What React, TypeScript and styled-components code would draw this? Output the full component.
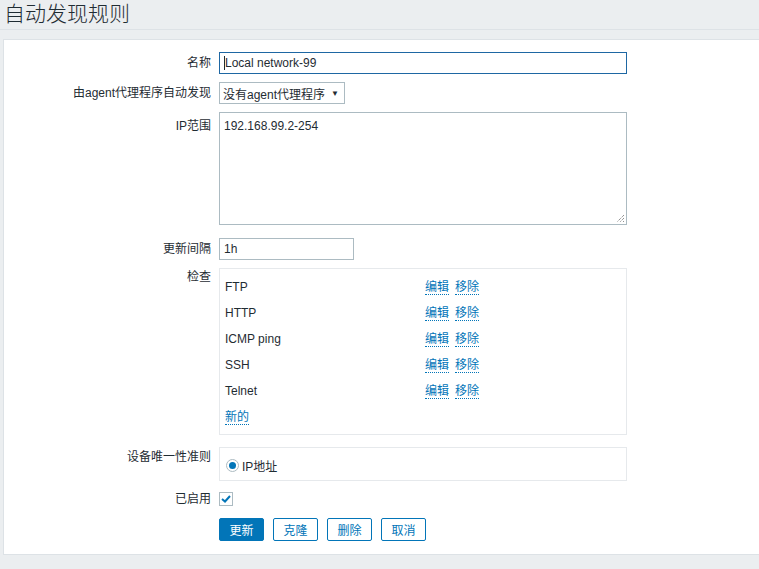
import React from 'react'
import styled, { createGlobalStyle } from 'styled-components'

const GlobalStyle = createGlobalStyle`
  html, body {
    margin: 0;
    padding: 0;
    background: #ebeef0;
    font-family: "Liberation Sans", Arial, "Noto Sans CJK SC", sans-serif;
    font-size: 12px;
    color: #1f2c33;
  }
`

const Header = styled.div`
  height: 29px;
  border-bottom: 1px solid #dde2e6;
  padding-left: 4px;
  display: flex;
  align-items: center;
`

const Title = styled.h1`
  margin: 0;
  font-size: 21px;
  font-weight: 300;
  line-height: 24px;
  color: #1f2c33;
  margin-top: -2px;
`

const Panel = styled.div`
  margin: 9px 0 0 3px;
  background: #fff;
  border: 1px solid #dde2e6;
  border-right: none;
  padding: 12px 0 13px 0;
`

const Row = styled.div<{ $mb?: number }>`
  display: grid;
  grid-template-columns: 207px 1fr;
  column-gap: 8px;
  margin-bottom: ${p => p.$mb ?? 8}px;
`

const Label = styled.div<{ $top?: boolean; $pt?: number }>`
  text-align: right;
  align-self: ${p => (p.$top ? 'start' : 'center')};
  padding-top: ${p => p.$pt ?? 0}px;
  white-space: nowrap;
  line-height: 14px;
`

const Field = styled.div`
  display: flex;
  align-items: center;
`

const TextInput = styled.div<{ $w: number; $focus?: boolean }>`
  box-sizing: border-box;
  width: ${p => p.$w}px;
  height: 22px;
  border: 1px solid ${p => (p.$focus ? '#1e67a3' : '#acbbc2')};
  padding: 0 4px;
  display: flex;
  align-items: center;
  font-size: 12px;
  background: #fff;
`

const Caret = styled.span`
  display: inline-block;
  width: 1px;
  height: 14px;
  background: #1f2c33;
`

const Select = styled.div`
  box-sizing: border-box;
  width: 126px;
  height: 22px;
  border: 1px solid #acbbc2;
  padding: 0 5px 0 3px;
  display: flex;
  align-items: center;
  justify-content: space-between;
  font-size: 12px;
`

const Arrow = styled.span`
  font-size: 8px;
  color: #1f2c33;
`

const TextArea = styled.div`
  position: relative;
  box-sizing: border-box;
  width: 408px;
  height: 113px;
  border: 1px solid #acbbc2;
  padding: 6px 4px;
  font-size: 12px;
`

const Grip = styled.svg`
  position: absolute;
  right: 1px;
  bottom: 1px;
`

const Box = styled.div<{ $h?: number }>`
  box-sizing: border-box;
  width: 408px;
  border: 1px solid #e6e9ec;
  padding: 5px 5px 4px 5px;
  ${p => (p.$h ? `height: ${p.$h}px;` : '')}
`

const CheckRow = styled.div`
  display: flex;
  align-items: center;
  height: 26px;
`

const CheckName = styled.div`
  width: 200px;
`

const Link = styled.a`
  color: #0275b8;
  text-decoration: none;
  border-bottom: 1px dotted #0275b8;
  line-height: 14px;
  margin-right: 6px;
  cursor: pointer;
`

const RadioLine = styled.div`
  display: flex;
  align-items: center;
  height: 24px;
  padding-left: 1px;
`

const Radio = styled.span`
  box-sizing: border-box;
  width: 13px;
  height: 13px;
  border-radius: 50%;
  border: 1px solid #acbbc2;
  display: flex;
  align-items: center;
  justify-content: center;
  margin-right: 3px;
  &::after {
    content: '';
    width: 7px;
    height: 7px;
    border-radius: 50%;
    background: #0275b8;
  }
`

const Check = styled.span`
  box-sizing: border-box;
  width: 14px;
  height: 14px;
  border: 1px solid #acbbc2;
  display: flex;
  align-items: center;
  justify-content: center;
  background: #fff;
`

const Buttons = styled.div`
  display: flex;
  gap: 9px;
`

const Button = styled.button<{ $primary?: boolean }>`
  box-sizing: border-box;
  width: 45px;
  height: 23px;
  padding: 0;
  font-family: inherit;
  font-size: 12px;
  border-radius: 2px;
  border: 1px solid #0275b8;
  background: ${p => (p.$primary ? '#0275b8' : '#fff')};
  color: ${p => (p.$primary ? '#fff' : '#0275b8')};
  cursor: pointer;
`

const checks = ['FTP', 'HTTP', 'ICMP ping', 'SSH', 'Telnet']

export default function App() {
  return (
    <>
      <GlobalStyle />
      <Header>
        <Title>自动发现规则</Title>
      </Header>
      <Panel>
        <Row>
          <Label>名称</Label>
          <Field>
            <TextInput $w={408} $focus>
              <Caret />
              Local network-99
            </TextInput>
          </Field>
        </Row>
        <Row>
          <Label>由agent代理程序自动发现</Label>
          <Field>
            <Select>
              <span>没有agent代理程序</span>
              <Arrow>▼</Arrow>
            </Select>
          </Field>
        </Row>
        <Row $mb={13}>
          <Label $top $pt={7}>IP范围</Label>
          <Field>
            <TextArea>
              192.168.99.2-254
              <Grip width="10" height="10" viewBox="0 0 10 10">
                <path d="M9 2 L2 9 M9 5 L5 9 M9 8 L8 9" stroke="#666" strokeWidth="1" strokeDasharray="1 1" />
              </Grip>
            </TextArea>
          </Field>
        </Row>
        <Row>
          <Label>更新间隔</Label>
          <Field>
            <TextInput $w={135}>1h</TextInput>
          </Field>
        </Row>
        <Row $mb={12}>
          <Label $top $pt={2}>检查</Label>
          <Box>
            {checks.map(c => (
              <CheckRow key={c}>
                <CheckName>{c}</CheckName>
                <Link>编辑</Link>
                <Link>移除</Link>
              </CheckRow>
            ))}
            <CheckRow>
              <Link>新的</Link>
            </CheckRow>
          </Box>
        </Row>
        <Row $mb={11}>
          <Label $top $pt={3}>设备唯一性准则</Label>
          <Box $h={34}>
            <RadioLine>
              <Radio />
              IP地址
            </RadioLine>
          </Box>
        </Row>
        <Row $mb={12}>
          <Label>已启用</Label>
          <Field>
            <Check>
              <svg width="10" height="8" viewBox="0 0 10 8">
                <path d="M1 4 L4 6.5 L9 1" stroke="#0275b8" strokeWidth="2" fill="none" />
              </svg>
            </Check>
          </Field>
        </Row>
        <Row $mb={0}>
          <div />
          <Buttons>
            <Button $primary>更新</Button>
            <Button>克隆</Button>
            <Button>删除</Button>
            <Button>取消</Button>
          </Buttons>
        </Row>
      </Panel>
    </>
  )
}
